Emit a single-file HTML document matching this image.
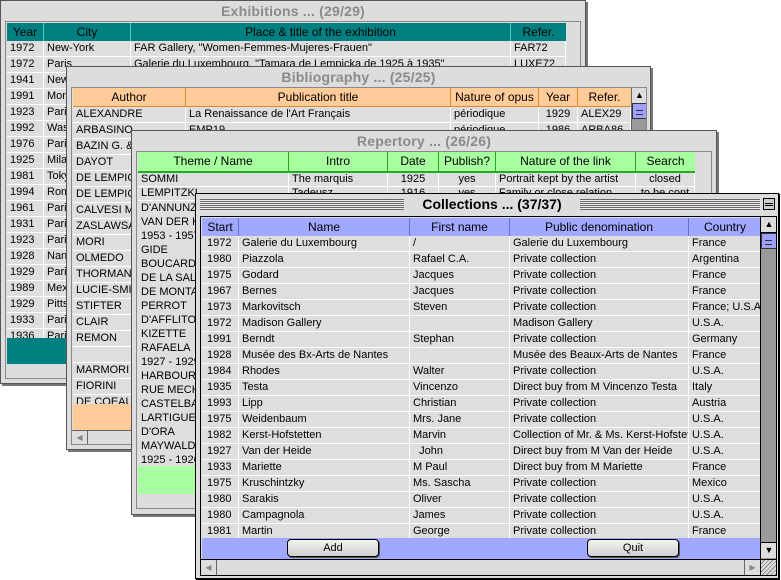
<!DOCTYPE html>
<html><head><meta charset="utf-8"><style>
*{box-sizing:border-box;margin:0;padding:0}
body{width:781px;height:580px;background:#fff;position:relative;overflow:hidden;font-family:"Liberation Sans","DejaVu Sans",sans-serif;font-size:11px;color:#000}
.win{position:absolute;background:#dddddd;border:1px solid #555;box-shadow:2px 2px 0 #777}
.title{position:absolute;left:0;right:0;top:2px;text-align:center;font-weight:bold;font-size:14px;color:#8a8a8a;letter-spacing:0.2px}
.frame{position:absolute;border:1px solid #888;background:#dddddd;overflow:hidden}
.abs{position:absolute}
.r{display:flex;height:16px}
.r>div{height:16px;border-right:1px solid #fff;border-bottom:1px solid #fff;line-height:15px;padding-left:3px;white-space:nowrap;overflow:hidden;background:#dedede}
.h{display:flex}
.h>div{text-align:center;font-size:12px;white-space:nowrap;overflow:hidden}
.c{text-align:center;padding-left:0!important}
.sb{position:absolute;background:#9a9a9a;border-left:1px solid #666}
.arr{position:absolute;left:0;width:15px;height:16px;background:#ddd;border-bottom:1px solid #666}
.thumb{position:absolute;left:0;width:15px;height:16px;background:#a0a0ff;border:1px solid #333;background-image:repeating-linear-gradient(#a0a0ff 0 3px,#333 3px 4px);background-size:7px 11px;background-position:3px 3px;background-repeat:no-repeat}
.btn{position:absolute;height:18px;border:1px solid #000;border-radius:4px;background:linear-gradient(#f4f4f4,#cfcfcf);text-align:center;line-height:16px;font-size:11px;box-shadow:1px 1px 0 #555}
</style></head><body>

<!-- Exhibitions -->
<div class="win" style="left:0;top:0;width:586px;height:384px">
<div class="title">Exhibitions ... (29/29)</div>
<div class="frame" style="left:4px;top:20px;width:576px;height:358px">
 <div class="h abs" style="left:1px;top:1px;height:18px;background:#008080">
  <div style="width:37px;border-right:1px solid #4cc;line-height:18px">Year</div>
  <div style="width:87px;border-right:1px solid #4cc;line-height:18px">City</div>
  <div style="width:380px;border-right:1px solid #4cc;line-height:18px">Place &amp; title of the exhibition</div>
  <div style="width:55px;line-height:18px">Refer.</div>
 </div>
 <div class="abs" style="left:1px;top:19px;width:559px;height:297px;overflow:hidden">
  <div class="r"><div style="width:37px">1972</div><div style="width:87px">New-York</div><div style="width:380px">FAR Gallery, "Women-Femmes-Mujeres-Frauen"</div><div style="width:55px">FAR72</div></div>
  <div class="r"><div style="width:37px">1972</div><div style="width:87px">Paris</div><div style="width:380px">Galerie du Luxembourg, "Tamara de Lempicka de 1925 à 1935"</div><div style="width:55px">LUXE72</div></div>
  <div class="r"><div style="width:37px">1941</div><div style="width:87px">New</div><div style="width:380px"></div><div style="width:55px"></div></div>
  <div class="r"><div style="width:37px">1991</div><div style="width:87px">Mont</div><div style="width:380px"></div><div style="width:55px"></div></div>
  <div class="r"><div style="width:37px">1923</div><div style="width:87px">Paris</div><div style="width:380px"></div><div style="width:55px"></div></div>
  <div class="r"><div style="width:37px">1992</div><div style="width:87px">Wash</div><div style="width:380px"></div><div style="width:55px"></div></div>
  <div class="r"><div style="width:37px">1976</div><div style="width:87px">Paris</div><div style="width:380px"></div><div style="width:55px"></div></div>
  <div class="r"><div style="width:37px">1925</div><div style="width:87px">Milan</div><div style="width:380px"></div><div style="width:55px"></div></div>
  <div class="r"><div style="width:37px">1981</div><div style="width:87px">Toky</div><div style="width:380px"></div><div style="width:55px"></div></div>
  <div class="r"><div style="width:37px">1994</div><div style="width:87px">Rome</div><div style="width:380px"></div><div style="width:55px"></div></div>
  <div class="r"><div style="width:37px">1961</div><div style="width:87px">Paris</div><div style="width:380px"></div><div style="width:55px"></div></div>
  <div class="r"><div style="width:37px">1931</div><div style="width:87px">Paris</div><div style="width:380px"></div><div style="width:55px"></div></div>
  <div class="r"><div style="width:37px">1923</div><div style="width:87px">Paris</div><div style="width:380px"></div><div style="width:55px"></div></div>
  <div class="r"><div style="width:37px">1928</div><div style="width:87px">Nante</div><div style="width:380px"></div><div style="width:55px"></div></div>
  <div class="r"><div style="width:37px">1929</div><div style="width:87px">Paris</div><div style="width:380px"></div><div style="width:55px"></div></div>
  <div class="r"><div style="width:37px">1989</div><div style="width:87px">Mexi</div><div style="width:380px"></div><div style="width:55px"></div></div>
  <div class="r"><div style="width:37px">1929</div><div style="width:87px">Pitts</div><div style="width:380px"></div><div style="width:55px"></div></div>
  <div class="r"><div style="width:37px">1933</div><div style="width:87px">Paris</div><div style="width:380px"></div><div style="width:55px"></div></div>
  <div class="r"><div style="width:37px">1936</div><div style="width:87px">Paris</div><div style="width:380px"></div><div style="width:55px"></div></div>
 </div>
 <div class="abs" style="left:1px;top:316px;width:559px;height:26px;background:#008080"></div>
</div>
</div>

<!-- Bibliography -->
<div class="win" style="left:66px;top:66px;width:585px;height:384px">
<div class="title">Bibliography ... (25/25)</div>
<div class="frame" style="left:4px;top:20px;width:576px;height:358px">
 <div class="h abs" style="left:1px;top:0;height:19px;background:#ffcc99;border-bottom:1px solid #e08a30">
  <div style="width:113px;border-right:1px solid #e08a30;line-height:18px">Author</div>
  <div style="width:265px;border-right:1px solid #e08a30;line-height:18px">Publication title</div>
  <div style="width:88px;border-right:1px solid #e08a30;line-height:18px">Nature of opus</div>
  <div style="width:39px;border-right:1px solid #e08a30;line-height:18px">Year</div>
  <div style="width:53px;line-height:18px">Refer.</div>
 </div>
 <div class="abs" style="left:1px;top:19px;width:558px;height:297px;overflow:hidden">
  <div class="r"><div style="width:113px">ALEXANDRE</div><div style="width:265px">La Renaissance de l'Art Français</div><div style="width:88px">périodique</div><div style="width:39px" class="c">1929</div><div style="width:53px">ALEX29</div></div>
  <div class="r"><div style="width:113px">ARBASINO</div><div style="width:265px">EMP19</div><div style="width:88px">périodique</div><div style="width:39px" class="c">1986</div><div style="width:53px">ARBA86</div></div>
  <div class="r"><div style="width:113px">BAZIN G. &amp; IT</div><div style="width:265px"></div><div style="width:88px"></div><div style="width:39px"></div><div style="width:53px"></div></div>
  <div class="r"><div style="width:113px">DAYOT</div><div style="width:265px"></div><div style="width:88px"></div><div style="width:39px"></div><div style="width:53px"></div></div>
  <div class="r"><div style="width:113px">DE LEMPICKA</div><div style="width:265px"></div><div style="width:88px"></div><div style="width:39px"></div><div style="width:53px"></div></div>
  <div class="r"><div style="width:113px">DE LEMPICKA</div><div style="width:265px"></div><div style="width:88px"></div><div style="width:39px"></div><div style="width:53px"></div></div>
  <div class="r"><div style="width:113px">CALVESI M. &amp;</div><div style="width:265px"></div><div style="width:88px"></div><div style="width:39px"></div><div style="width:53px"></div></div>
  <div class="r"><div style="width:113px">ZASLAWSAK</div><div style="width:265px"></div><div style="width:88px"></div><div style="width:39px"></div><div style="width:53px"></div></div>
  <div class="r"><div style="width:113px">MORI</div><div style="width:265px"></div><div style="width:88px"></div><div style="width:39px"></div><div style="width:53px"></div></div>
  <div class="r"><div style="width:113px">OLMEDO</div><div style="width:265px"></div><div style="width:88px"></div><div style="width:39px"></div><div style="width:53px"></div></div>
  <div class="r"><div style="width:113px">THORMANN</div><div style="width:265px"></div><div style="width:88px"></div><div style="width:39px"></div><div style="width:53px"></div></div>
  <div class="r"><div style="width:113px">LUCIE-SMITH</div><div style="width:265px"></div><div style="width:88px"></div><div style="width:39px"></div><div style="width:53px"></div></div>
  <div class="r"><div style="width:113px">STIFTER</div><div style="width:265px"></div><div style="width:88px"></div><div style="width:39px"></div><div style="width:53px"></div></div>
  <div class="r"><div style="width:113px">CLAIR</div><div style="width:265px"></div><div style="width:88px"></div><div style="width:39px"></div><div style="width:53px"></div></div>
  <div class="r"><div style="width:113px">REMON</div><div style="width:265px"></div><div style="width:88px"></div><div style="width:39px"></div><div style="width:53px"></div></div>
  <div class="r"><div style="width:113px"></div><div style="width:265px"></div><div style="width:88px"></div><div style="width:39px"></div><div style="width:53px"></div></div>
  <div class="r"><div style="width:113px">MARMORI</div><div style="width:265px"></div><div style="width:88px"></div><div style="width:39px"></div><div style="width:53px"></div></div>
  <div class="r"><div style="width:113px">FIORINI</div><div style="width:265px"></div><div style="width:88px"></div><div style="width:39px"></div><div style="width:53px"></div></div>
  <div class="r"><div style="width:113px">DE COEAUX</div><div style="width:265px"></div><div style="width:88px"></div><div style="width:39px"></div><div style="width:53px"></div></div>
 </div>
 <div class="abs" style="left:1px;top:316px;width:558px;height:26px;background:#ffcc99"></div>
 <div class="abs" style="left:0;top:342px;width:575px;height:15px;border-top:1px solid #666;background:#ddd"><div class="abs" style="left:0;top:0;width:16px;height:14px;border-right:1px solid #666;font-size:8px;color:#888;line-height:14px;text-align:center">◀</div></div>
 <div class="sb" style="left:559px;top:0;width:16px;height:342px">
  <div class="arr" style="top:0;text-align:center;font-size:9px;line-height:15px">▲</div>
  <div class="thumb" style="top:15px"></div>
 </div>
</div>
</div>

<!-- Repertory -->
<div class="win" style="left:131px;top:130px;width:586px;height:385px">
<div class="title">Repertory ... (26/26)</div>
<div class="frame" style="left:4px;top:20px;width:576px;height:358px">
 <div class="h abs" style="left:1px;top:0;height:21px;background:#a8ffa0;border-bottom:2px solid #22aa22">
  <div style="width:151px;border-right:1px solid #22aa22;line-height:19px">Theme / Name</div>
  <div style="width:99px;border-right:1px solid #22aa22;line-height:19px">Intro</div>
  <div style="width:51px;border-right:1px solid #22aa22;line-height:19px">Date</div>
  <div style="width:57px;border-right:1px solid #22aa22;line-height:19px">Publish?</div>
  <div style="width:140px;border-right:1px solid #22aa22;line-height:19px">Nature of the link</div>
  <div style="width:59px;line-height:19px">Search</div>
 </div>
 <div class="abs" style="left:1px;top:21px;width:557px;height:293px;overflow:hidden">
  <div class="r" style="height:14px"><div style="width:151px;height:14px;line-height:13px">SOMMI</div><div style="width:99px;height:14px;line-height:13px">The marquis</div><div class="c" style="width:51px;height:14px;line-height:13px">1925</div><div class="c" style="width:57px;height:14px;line-height:13px">yes</div><div style="width:140px;height:14px;line-height:13px">Portrait kept by the artist</div><div class="c" style="width:59px;height:14px;line-height:13px">closed</div></div>
  <div class="r" style="height:14px"><div style="width:151px;height:14px;line-height:13px">LEMPITZKI</div><div style="width:99px;height:14px;line-height:13px">Tadeusz</div><div class="c" style="width:51px;height:14px;line-height:13px">1916</div><div class="c" style="width:57px;height:14px;line-height:13px">yes</div><div style="width:140px;height:14px;line-height:13px">Family or close relation</div><div class="c" style="width:59px;height:14px;line-height:13px">to be cont</div></div>
  <div style="line-height:14px;padding-left:3px;background:#dedede">
   D'ANNUNZIO<br>VAN DER HEIDE<br>1953 - 1957<br>GIDE<br>BOUCARD<br>DE LA SALLE<br>DE MONTAUT<br>PERROT<br>D'AFFLITO<br>KIZETTE<br>RAFAELA<br>1927 - 1929<br>HARBOURS<br>RUE MECHAIN<br>CASTELBARCO<br>LARTIGUE<br>D'ORA<br>MAYWALD<br>1925 - 1926
  </div>
 </div>
 <div class="abs" style="left:1px;top:314px;width:557px;height:28px;background:#a8ffa0"></div>
</div>
</div>

<!-- Collections (active) -->
<div class="win" style="left:195px;top:193px;width:584px;height:386px;border:1px solid #000;box-shadow:1px 1px 0 #000">
 <div class="abs" style="left:4px;top:5px;width:204px;height:11px;background:repeating-linear-gradient(#666 0 1px,#eee 1px 2px)"></div>
 <div class="abs" style="left:384px;top:5px;width:180px;height:11px;background:repeating-linear-gradient(#666 0 1px,#eee 1px 2px)"></div>
 <div class="abs" style="left:208px;top:2px;width:176px;text-align:center;font-weight:bold;font-size:14px;color:#000">Collections ... (37/37)</div>
 <div class="abs" style="left:567px;top:4px;width:12px;height:12px;border:1px solid #000;background:#ccc"><div class="abs" style="left:1px;top:4px;width:8px;height:1px;background:#000"></div><div class="abs" style="left:1px;top:6px;width:8px;height:1px;background:#000"></div></div>
<div class="frame" style="left:4px;top:22px;width:577px;height:360px;border-color:#000">
 <div class="h abs" style="left:1px;top:1px;height:18px;background:#a0a8ff">
  <div style="width:37px;border-right:1px solid #6670dd;line-height:18px">Start</div>
  <div style="width:171px;border-right:1px solid #6670dd;line-height:18px">Name</div>
  <div style="width:100px;border-right:1px solid #6670dd;line-height:18px">First name</div>
  <div style="width:179px;border-right:1px solid #6670dd;line-height:18px">Public denomination</div>
  <div style="width:72px;line-height:18px">Country</div>
 </div>
 <div class="abs" style="left:1px;top:19px;width:559px;height:302px;overflow:hidden">
  <div class="r"><div style="width:37px;padding-left:5px">1972</div><div style="width:171px">Galerie du Luxembourg</div><div style="width:100px">/</div><div style="width:179px">Galerie du Luxembourg</div><div style="width:72px">France</div></div>
  <div class="r"><div style="width:37px;padding-left:5px">1980</div><div style="width:171px">Piazzola</div><div style="width:100px">Rafael C.A.</div><div style="width:179px">Private collection</div><div style="width:72px">Argentina</div></div>
  <div class="r"><div style="width:37px;padding-left:5px">1975</div><div style="width:171px">Godard</div><div style="width:100px">Jacques</div><div style="width:179px">Private collection</div><div style="width:72px">France</div></div>
  <div class="r"><div style="width:37px;padding-left:5px">1967</div><div style="width:171px">Bernes</div><div style="width:100px">Jacques</div><div style="width:179px">Private collection</div><div style="width:72px">France</div></div>
  <div class="r"><div style="width:37px;padding-left:5px">1973</div><div style="width:171px">Markovitsch</div><div style="width:100px">Steven</div><div style="width:179px">Private collection</div><div style="width:72px">France; U.S.A.</div></div>
  <div class="r"><div style="width:37px;padding-left:5px">1972</div><div style="width:171px">Madison Gallery</div><div style="width:100px"></div><div style="width:179px">Madison Gallery</div><div style="width:72px">U.S.A.</div></div>
  <div class="r"><div style="width:37px;padding-left:5px">1991</div><div style="width:171px">Berndt</div><div style="width:100px">Stephan</div><div style="width:179px">Private collection</div><div style="width:72px">Germany</div></div>
  <div class="r"><div style="width:37px;padding-left:5px">1928</div><div style="width:171px">Musée des Bx-Arts de Nantes</div><div style="width:100px"></div><div style="width:179px">Musée des Beaux-Arts de Nantes</div><div style="width:72px">France</div></div>
  <div class="r"><div style="width:37px;padding-left:5px">1984</div><div style="width:171px">Rhodes</div><div style="width:100px">Walter</div><div style="width:179px">Private collection</div><div style="width:72px">U.S.A.</div></div>
  <div class="r"><div style="width:37px;padding-left:5px">1935</div><div style="width:171px">Testa</div><div style="width:100px">Vincenzo</div><div style="width:179px">Direct buy from M Vincenzo Testa</div><div style="width:72px">Italy</div></div>
  <div class="r"><div style="width:37px;padding-left:5px">1993</div><div style="width:171px">Lipp</div><div style="width:100px">Christian</div><div style="width:179px">Private collection</div><div style="width:72px">Austria</div></div>
  <div class="r"><div style="width:37px;padding-left:5px">1975</div><div style="width:171px">Weidenbaum</div><div style="width:100px">Mrs. Jane</div><div style="width:179px">Private collection</div><div style="width:72px">U.S.A.</div></div>
  <div class="r"><div style="width:37px;padding-left:5px">1982</div><div style="width:171px">Kerst-Hofstetten</div><div style="width:100px">Marvin</div><div style="width:179px">Collection of Mr. &amp; Ms. Kerst-Hofstett</div><div style="width:72px">U.S.A.</div></div>
  <div class="r"><div style="width:37px;padding-left:5px">1927</div><div style="width:171px">Van der Heide</div><div style="width:100px">&nbsp;&nbsp;John</div><div style="width:179px">Direct buy from M Van der Heide</div><div style="width:72px">U.S.A.</div></div>
  <div class="r"><div style="width:37px;padding-left:5px">1933</div><div style="width:171px">Mariette</div><div style="width:100px">M Paul</div><div style="width:179px">Direct buy from M Mariette</div><div style="width:72px">France</div></div>
  <div class="r"><div style="width:37px;padding-left:5px">1975</div><div style="width:171px">Kruschintzky</div><div style="width:100px">Ms. Sascha</div><div style="width:179px">Private collection</div><div style="width:72px">Mexico</div></div>
  <div class="r"><div style="width:37px;padding-left:5px">1980</div><div style="width:171px">Sarakis</div><div style="width:100px">Oliver</div><div style="width:179px">Private collection</div><div style="width:72px">U.S.A.</div></div>
  <div class="r"><div style="width:37px;padding-left:5px">1980</div><div style="width:171px">Campagnola</div><div style="width:100px">James</div><div style="width:179px">Private collection</div><div style="width:72px">U.S.A.</div></div>
  <div class="r"><div style="width:37px;padding-left:5px">1981</div><div style="width:171px">Martin</div><div style="width:100px">George</div><div style="width:179px">Private collection</div><div style="width:72px">France</div></div>
 </div>
 <div class="abs" style="left:1px;top:321px;width:559px;height:21px;background:#a0a8ff"></div>
 <div class="btn" style="left:86px;top:322px;width:92px">Add</div>
 <div class="btn" style="left:386px;top:322px;width:92px">Quit</div>
 <div class="abs" style="left:0;top:342px;width:576px;height:17px;border-top:1px solid #000;background:#ddd">
  <div class="abs" style="left:0;top:0;width:16px;height:16px;border-right:1px solid #666;font-size:8px;color:#888;line-height:16px;text-align:center">◀</div>
  <div class="abs" style="left:543px;top:0;width:16px;height:16px;border-left:1px solid #666;font-size:8px;color:#888;line-height:16px;text-align:center">▶</div>
  <div class="abs" style="left:559px;top:0;width:16px;height:16px;border-left:1px solid #000;background:repeating-linear-gradient(135deg,#ddd 0 2px,#888 2px 3px)"></div>
 </div>
 <div class="sb" style="left:559px;top:0;width:17px;height:342px;border-left:1px solid #000">
  <div class="arr" style="top:0;width:16px;text-align:center;font-size:9px;line-height:15px;border-bottom:1px solid #000">▲</div>
  <div class="thumb" style="top:16px;width:16px"></div>
  <div class="arr" style="top:325px;width:16px;text-align:center;font-size:9px;line-height:15px;border-top:1px solid #000;border-bottom:none">▼</div>
 </div>
</div>
</div>

</body></html>
